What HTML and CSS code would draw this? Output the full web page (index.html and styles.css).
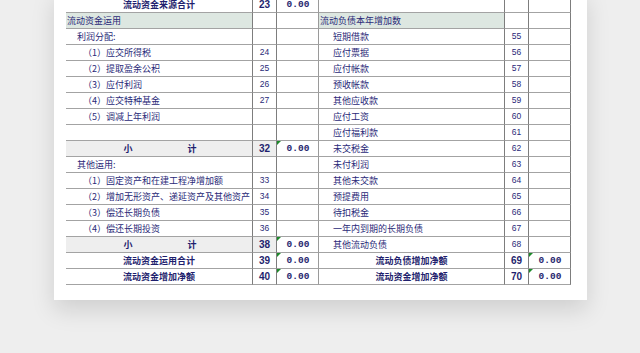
FILE: index.html
```html
<!DOCTYPE html>
<html lang="zh">
<head>
<meta charset="utf-8">
<link rel="stylesheet" href="styles.css">
</head>
<body>
<div class="paper">
  <div class="sheet">
    <div class="row"><div class="c lbl b ctr">流动资金来源合计</div><div class="c num b">23</div><div class="c val">0.00</div><div class="c lbl"></div><div class="c num"></div><div class="c val"></div></div>
    <div class="row"><div class="c lbl hdr">流动资金运用</div><div class="c num"></div><div class="c val"></div><div class="c lbl hdr">流动负债本年增加数</div><div class="c num"></div><div class="c val"></div></div>
    <div class="row"><div class="c lbl i1">利润分配:</div><div class="c num"></div><div class="c val"></div><div class="c lbl ri">短期借款</div><div class="c num">55</div><div class="c val"></div></div>
    <div class="row"><div class="c lbl i2">（1）应交所得税</div><div class="c num">24</div><div class="c val"></div><div class="c lbl ri">应付票据</div><div class="c num">56</div><div class="c val"></div></div>
    <div class="row"><div class="c lbl i2">（2）提取盈余公积</div><div class="c num">25</div><div class="c val"></div><div class="c lbl ri">应付帐款</div><div class="c num">57</div><div class="c val"></div></div>
    <div class="row"><div class="c lbl i2">（3）应付利润</div><div class="c num">26</div><div class="c val"></div><div class="c lbl ri">预收帐款</div><div class="c num">58</div><div class="c val"></div></div>
    <div class="row"><div class="c lbl i2">（4）应交特种基金</div><div class="c num">27</div><div class="c val"></div><div class="c lbl ri">其他应收款</div><div class="c num">59</div><div class="c val"></div></div>
    <div class="row"><div class="c lbl i2">（5）调减上年利润</div><div class="c num"></div><div class="c val"></div><div class="c lbl ri">应付工资</div><div class="c num">60</div><div class="c val"></div></div>
    <div class="row"><div class="c lbl"></div><div class="c num"></div><div class="c val"></div><div class="c lbl ri">应付福利款</div><div class="c num">61</div><div class="c val"></div></div>
    <div class="row"><div class="c lbl sub b split"><span>小</span><span>计</span></div><div class="c num sub b">32</div><div class="c val mark">0.00</div><div class="c lbl ri">未交税金</div><div class="c num">62</div><div class="c val"></div></div>
    <div class="row"><div class="c lbl i1">其他运用:</div><div class="c num"></div><div class="c val"></div><div class="c lbl ri">未付利润</div><div class="c num">63</div><div class="c val"></div></div>
    <div class="row"><div class="c lbl i2">（1）固定资产和在建工程净增加额</div><div class="c num">33</div><div class="c val"></div><div class="c lbl ri">其他未交款</div><div class="c num">64</div><div class="c val"></div></div>
    <div class="row"><div class="c lbl i2">（2）增加无形资产、递延资产及其他资产</div><div class="c num">34</div><div class="c val"></div><div class="c lbl ri">预提费用</div><div class="c num">65</div><div class="c val"></div></div>
    <div class="row"><div class="c lbl i2">（3）偿还长期负债</div><div class="c num">35</div><div class="c val"></div><div class="c lbl ri">待扣税金</div><div class="c num">66</div><div class="c val"></div></div>
    <div class="row"><div class="c lbl i2">（4）偿还长期投资</div><div class="c num">36</div><div class="c val"></div><div class="c lbl ri">一年内到期的长期负债</div><div class="c num">67</div><div class="c val"></div></div>
    <div class="row"><div class="c lbl sub b split"><span>小</span><span>计</span></div><div class="c num sub b">38</div><div class="c val mark">0.00</div><div class="c lbl ri">其他流动负债</div><div class="c num">68</div><div class="c val"></div></div>
    <div class="row"><div class="c lbl b ctr">流动资金运用合计</div><div class="c num b">39</div><div class="c val mark">0.00</div><div class="c lbl b ctr">流动负债增加净额</div><div class="c num b">69</div><div class="c val mark">0.00</div></div>
    <div class="row"><div class="c lbl b ctr">流动资金增加净额</div><div class="c num b">40</div><div class="c val mark">0.00</div><div class="c lbl b ctr">流动资金增加净额</div><div class="c num b">70</div><div class="c val mark">0.00</div></div>
  </div>
</div>
</body>
</html>
```

FILE: styles.css
```css
html, body {
  margin: 0;
  padding: 0;
  background: #eeeeee;
  overflow: hidden;
}
body {
  width: 640px;
  height: 353px;
}
.paper {
  margin: -10px 0 0 54px;
  width: 533px;
  padding: 7px 0 15px 12px;
  box-sizing: border-box;
  background: #ffffff;
  box-shadow: 0 10px 22px rgba(0, 0, 0, 0.13);
}
.sheet {
  width: 505px;
  display: flex;
  flex-direction: column;
}
.row {
  display: grid;
  grid-template-columns: 187px 24px 42px 186px 24px 42px;
  height: 16px;
}
.c {
  box-sizing: border-box;
  border-bottom: 1px solid #a3a3a3;
  border-right: 1px solid #7d7d7d;
  height: 16px;
  line-height: 15px;
  font-family: "Noto Sans CJK SC", "Liberation Sans", sans-serif;
  font-size: 9px;
  color: #2a2a78;
  white-space: nowrap;
  overflow: hidden;
  position: relative;
}
.row > .c:nth-child(3) {
  border-right-color: #9a9a9a;
}
.lbl {
  padding-left: 1px;
}
.hdr {
  background: #dde7e1;
}
.sub {
  background: #eeeeee;
}
.b {
  font-weight: 700;
  color: #1f1f6e;
}
.ctr {
  text-align: center;
  padding-left: 0;
}
.split {
  display: flex;
  justify-content: center;
  gap: 55px;
  padding-left: 2px;
}
.i1 {
  padding-left: 11px;
}
.i2 {
  padding-left: 17px;
}
.ri {
  padding-left: 14px;
}
.num {
  text-align: center;
  font-family: "Liberation Sans", "DejaVu Sans", sans-serif;
  font-size: 8.5px;
}
.num.b {
  font-size: 10px;
}
.val {
  display: flex;
  align-items: center;
  justify-content: center;
  padding-left: 1px;
  font-family: "Liberation Mono", "DejaVu Sans Mono", monospace;
  font-weight: 700;
  font-size: 9.5px;
  line-height: 1;
  color: #1f1f6e;
}
.mark::before {
  content: "";
  position: absolute;
  left: 0;
  top: 0;
  border-top: 4px solid #1d8a2a;
  border-right: 4px solid transparent;
}
```
